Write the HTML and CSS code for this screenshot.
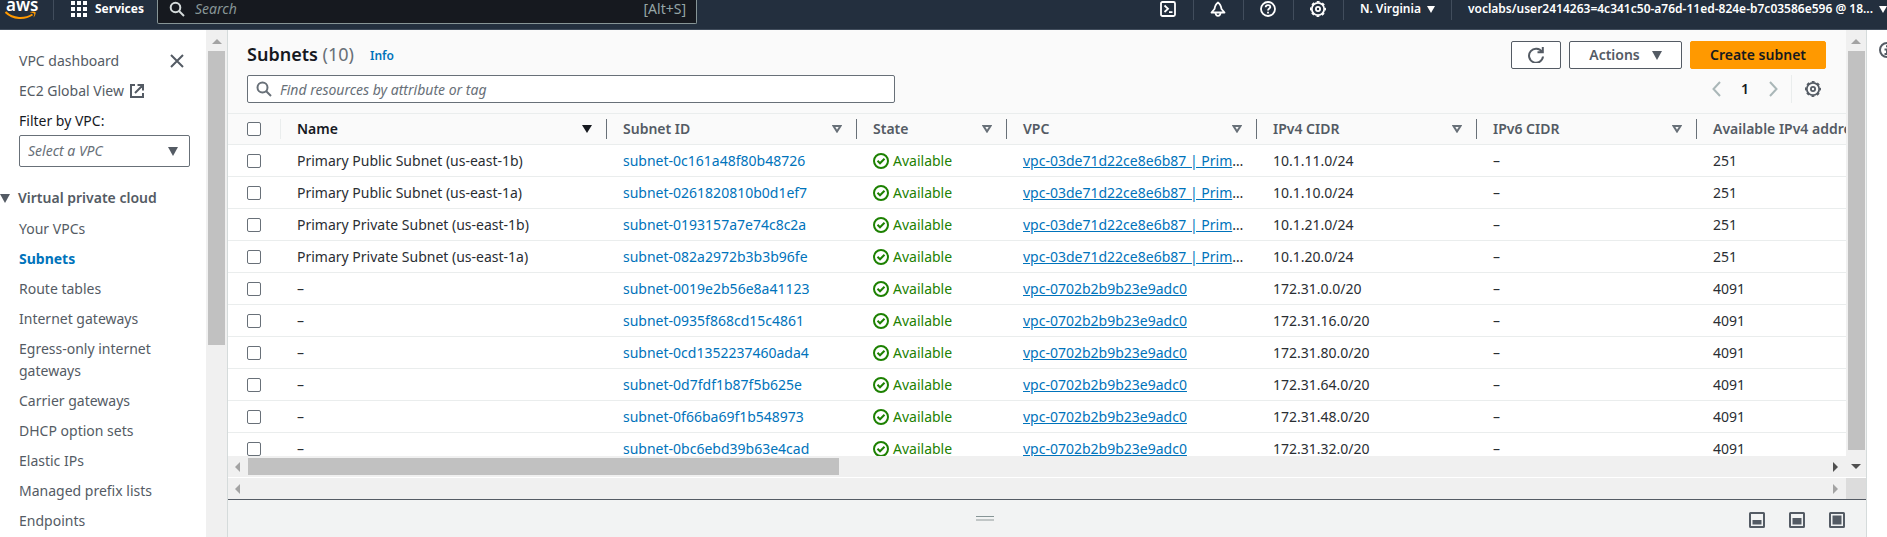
FILE: index.html
```html
<!DOCTYPE html>
<html lang="en">
<head>
<meta charset="utf-8">
<title>Subnets | VPC Console</title>
<link rel="stylesheet" href="styles.css">
</head>
<body>
<header class="topbar">
  <a class="logo" href="#" aria-label="aws"><span class="logo-word">aws</span>
    <svg class="logo-smile" width="32" height="9" viewBox="0 0 32 9"><path d="M.5 1C8 8.500 20 8.500 27.500 3.500" fill="none" stroke="#f90" stroke-width="2"/><path d="M24.500 1.200C27 .3 29.500 .2 30.500 1c.5 1.500-.5 4-2 5.500.5-1.600 1-3.200.6-4-.8-.6-2.800-.9-4.600-1.300z" fill="#f90"/></svg>
  </a>
  <button class="services" type="button">
    <svg width="16" height="16" viewBox="0 0 16 16" fill="#fff"><path d="M0 0h4v4H0zM6 0h4v4H6zM12 0h4v4h-4zM0 6h4v4H0zM6 6h4v4H6zM12 6h4v4h-4zM0 12h4v4H0zM6 12h4v4H6zM12 12h4v4h-4z"/></svg>
    <span>Services</span>
  </button>
  <div class="global-search">
    <svg width="16" height="16" viewBox="0 0 16 16" fill="none" stroke="#d5dbdb" stroke-width="2"><circle cx="6.500" cy="6.500" r="4.800"/><path d="M10 10l5 5"/></svg>
    <input type="search" placeholder="Search" aria-label="Search">
    <span>[Alt+S]</span>
  </div>
  <nav class="tools" aria-label="Account tools">
    <button type="button" aria-label="CloudShell"><svg width="16" height="16" viewBox="0 0 16 16" fill="none" stroke="#fff" stroke-width="1.800"><rect x="1" y="1" width="14" height="14" rx="1.500"/><path d="M4.500 4.500L8 7.800 4.500 11M9 11.200h3.500"/></svg></button>
    <button type="button" aria-label="Notifications"><svg width="16" height="16" viewBox="0 0 16 16" fill="none" stroke="#fff" stroke-width="1.800" stroke-linejoin="round"><path d="M8 1.500C5.500 3 5 5 4.500 8L1.500 11.500h13L11.500 8C11 5 10.500 3 8 1.500z"/><path d="M5.500 12c.2 1.900 1 2.900 2.500 2.900s2.300-1 2.500-2.900"/></svg></button>
    <button type="button" aria-label="Help"><svg width="16" height="16" viewBox="0 0 16 16" fill="none" stroke="#fff" stroke-width="1.800"><circle cx="8" cy="8" r="7"/><path d="M5.700 6.300c0-3 4.700-2.900 4.600-.2C10.200 7.500 8 7.600 8 9.500"/><path d="M8 10.700v1.800"/></svg></button>
    <button type="button" aria-label="Settings"><svg width="16" height="16" viewBox="0 0 16 16" fill="none" stroke="#fff"><circle cx="8" cy="8" r="6.200" stroke-width="1.800"/><circle cx="8" cy="8" r="7.300" stroke-width="1.400" stroke-dasharray="2.900 2.830" stroke-dashoffset="1.450"/><circle cx="8" cy="8" r="2.100" stroke-width="1.800"/></svg></button>
    <button type="button" class="region">N. Virginia <i class="caret"></i></button>
    <button type="button" class="account"><span>voclabs/user2414263=4c341c50-a76d-11ed-824e-b7c03586e596 @ 18...</span> <i class="caret"></i></button>
  </nav>
</header>

<div class="shell">
  <nav class="sidebar" aria-label="VPC">
    <div class="side-content">
      <div class="side-head"><a href="#">VPC dashboard</a>
        <button type="button" class="close" aria-label="Close"><svg width="14" height="14" viewBox="0 0 14 14" fill="none" stroke="#545b64" stroke-width="2"><path d="M1 1l12 12M13 1L1 13"/></svg></button>
      </div>
      <a class="side-link" href="#">EC2 Global View
        <svg width="14" height="14" viewBox="0 0 14 14" fill="none" stroke="#545b64" stroke-width="2"><path d="M5 1H1v12h12V9M7.500 1H13v5.500M13 1L5 9"/></svg></a>
      <label class="filter-label" for="vpc-filter">Filter by VPC:</label>
      <div class="select">
        <select id="vpc-filter"><option>Select a VPC</option></select>
        <svg width="10" height="9" viewBox="0 0 10 9"><path d="M0 0h10L5 9z" fill="#545b64"/></svg>
      </div>
      <button type="button" class="section"><svg width="10" height="9" viewBox="0 0 10 9"><path d="M0 0h10L5 9z" fill="#545b64"/></svg>Virtual private cloud</button>
      <ul class="side-list">
        <li><a href="#">Your VPCs</a></li>
        <li><a href="#" class="current" aria-current="page">Subnets</a></li>
        <li><a href="#">Route tables</a></li>
        <li><a href="#">Internet gateways</a></li>
        <li><a href="#">Egress-only internet gateways</a></li>
        <li><a href="#">Carrier gateways</a></li>
        <li><a href="#">DHCP option sets</a></li>
        <li><a href="#">Elastic IPs</a></li>
        <li><a href="#">Managed prefix lists</a></li>
        <li><a href="#">Endpoints</a></li>
      </ul>
    </div>
    <div class="vbar side-bar"><i class="arrow up"></i><div class="thumb side-thumb"></div></div>
  </nav>

  <main class="main">
    <div class="upper">
      <div class="pane">
        <section class="panel-head">
          <div class="title-row">
            <h1>Subnets <span>(10)</span></h1>
            <a class="info" href="#">Info</a>
            <div class="actions">
              <button type="button" class="btn refresh" aria-label="Refresh"><svg width="16" height="16" viewBox="0 0 16 16" fill="none" stroke="#545b64" stroke-width="2"><path d="M14 5A7 7 0 1 0 15 9.500M9.500 5.200h5.300V0"/></svg></button>
              <button type="button" class="btn menu">Actions <svg width="10" height="9" viewBox="0 0 10 9"><path d="M0 0h10L5 9z" fill="#545b64"/></svg></button>
              <button type="button" class="btn primary">Create subnet</button>
            </div>
          </div>
          <div class="filter-row">
            <div class="find">
              <svg width="16" height="16" viewBox="0 0 16 16" fill="none" stroke="#687078" stroke-width="2"><circle cx="6.500" cy="6.500" r="5"/><path d="M10 10l5 5"/></svg>
              <input type="search" placeholder="Find resources by attribute or tag" aria-label="Find resources">
            </div>
            <div class="pager">
              <button type="button" aria-label="Previous page"><svg width="9" height="16" viewBox="0 0 9 16" fill="none" stroke="#aab7b8" stroke-width="2"><path d="M8 1L1.500 8 8 15"/></svg></button>
              <button type="button" class="page">1</button>
              <button type="button" aria-label="Next page"><svg width="9" height="16" viewBox="0 0 9 16" fill="none" stroke="#aab7b8" stroke-width="2"><path d="M1 1l6.500 7L1 15"/></svg></button>
              <button type="button" class="prefs" aria-label="Preferences"><svg width="16" height="16" viewBox="0 0 16 16" fill="none" stroke="#545b64"><circle cx="8" cy="8" r="6.200" stroke-width="1.800"/><circle cx="8" cy="8" r="7.300" stroke-width="1.400" stroke-dasharray="2.900 2.830" stroke-dashoffset="1.450"/><circle cx="8" cy="8" r="2.100" stroke-width="1.800"/></svg></button>
            </div>
          </div>
        </section>
        <div class="table-wrap">
          <table>
            <colgroup><col class="c-check"><col class="c-name"><col class="c-id"><col class="c-state"><col class="c-id"><col class="c-cidr"><col class="c-cidr"><col></colgroup>
            <thead><tr>
              <th><div class="th light"><input type="checkbox" aria-label="Select all"></div></th>
              <th class="sorted"><div class="th">Name <svg width="10" height="8" viewBox="0 0 10 8"><path d="M0 0h10L5 8z" fill="#16191f"/></svg></div></th>
              <th><div class="th">Subnet ID <svg width="10" height="8" viewBox="0 0 10 8"><path d="M1.500 1h7L5 6.500z" fill="none" stroke="#687078" stroke-width="2"/></svg></div></th>
              <th><div class="th">State <svg width="10" height="8" viewBox="0 0 10 8"><path d="M1.500 1h7L5 6.500z" fill="none" stroke="#687078" stroke-width="2"/></svg></div></th>
              <th><div class="th">VPC <svg width="10" height="8" viewBox="0 0 10 8"><path d="M1.500 1h7L5 6.500z" fill="none" stroke="#687078" stroke-width="2"/></svg></div></th>
              <th><div class="th">IPv4 CIDR <svg width="10" height="8" viewBox="0 0 10 8"><path d="M1.500 1h7L5 6.500z" fill="none" stroke="#687078" stroke-width="2"/></svg></div></th>
              <th><div class="th">IPv6 CIDR <svg width="10" height="8" viewBox="0 0 10 8"><path d="M1.500 1h7L5 6.500z" fill="none" stroke="#687078" stroke-width="2"/></svg></div></th>
              <th><div class="th">Available IPv4 addresses</div></th>
            </tr></thead>
            <tbody id="rows"></tbody>
          </table>
        </div>
        <div class="hbar"><i class="arrow left"></i><div class="thumb table-thumb"></div><i class="arrow right dark"></i></div>
      </div>
      <div class="vbar main-bar"><i class="arrow up"></i><div class="thumb main-thumb"></div><i class="arrow down dark"></i></div>
    </div>
    <div class="outer-bar"><div class="hbar"><i class="arrow left"></i><i class="arrow right"></i></div><div class="corner"></div></div>
    <div class="split">
      <div class="grip"></div>
      <div class="split-tools">
        <button type="button" aria-label="Small panel"><svg width="16" height="16" viewBox="0 0 16 16"><rect x="1" y="1" width="14" height="14" rx=".5" fill="none" stroke="#545b64" stroke-width="2"/><path d="M3.500 8h9v4.500h-9z" fill="#545b64"/></svg></button>
        <button type="button" aria-label="Medium panel"><svg width="16" height="16" viewBox="0 0 16 16"><rect x="1" y="1" width="14" height="14" rx=".5" fill="none" stroke="#545b64" stroke-width="2"/><path d="M3.500 6h9v6.500h-9z" fill="#545b64"/></svg></button>
        <button type="button" aria-label="Full panel"><svg width="16" height="16" viewBox="0 0 16 16"><rect x="1" y="1" width="14" height="14" rx=".5" fill="none" stroke="#545b64" stroke-width="2"/><path d="M3.500 3.500h9v9h-9z" fill="#545b64"/></svg></button>
      </div>
    </div>
  </main>

  <aside class="help">
    <button type="button" aria-label="Open help"><svg width="16" height="16" viewBox="0 0 16 16" fill="none" stroke="#545b64" stroke-width="2"><circle cx="8" cy="8" r="7"/><path d="M8 3.300v2M5.500 7.500H8V12M5.500 12h5"/></svg></button>
  </aside>
</div>
<script src="rows.js"></script>
</body>
</html>
```
FILE: styles.css
```css
* { box-sizing: border-box; }
body {
  margin: 0;
  height: 100vh;
  overflow: hidden;
  display: flex;
  flex-direction: column;
  background: #fff;
  color: #16191f;
  font: 14px/22px "Noto Sans", "Open Sans", sans-serif;
}
a { color: inherit; text-decoration: none; }
button { border: 0; padding: 0; background: none; color: inherit; font: inherit; display: flex; align-items: center; }
input { font: inherit; color: inherit; }
svg { flex: none; display: block; }
i { flex: none; }

/* top bar */
.topbar {
  flex: none;
  display: flex;
  align-items: flex-start;
  height: 30px;
  background: #232f3e;
  border-bottom: 1px solid #414d5c;
  color: #fff;
}
.logo { width: 54px; height: 20px; padding-left: 5px; border-right: 1px solid #414d5c; display: flex; flex-direction: column; justify-content: flex-end; }
.logo-word { font-size: 17px; line-height: 10px; font-weight: 600; padding-left: 1px; }
.logo-smile { flex: none; margin-top: 1px; }
.services { gap: 8px; height: 18px; width: 103px; padding-left: 17px; font-size: 12px; font-weight: 700; }
.global-search {
  flex: 0 1 540px;
  display: flex;
  align-items: center;
  gap: 10px;
  height: 24px;
  padding: 0 10px 6px 11px;
  background: #16191f;
  border: 1px solid #879596;
  border-top: 0;
  border-radius: 0 0 2px 2px;
  color: #95a5a6;
}
.global-search input { flex: 1; min-width: 0; height: 18px; padding: 0; border: 0; outline: 0; background: none; }
.global-search input::placeholder { color: #879596; font-style: italic; }
.tools { flex: none; display: flex; margin-left: auto; font-size: 12px; font-weight: 600; }
.tools button { height: 20px; padding: 0 16px 2px; border-right: 1px solid #414d5c; width: 50px; justify-content: center; }
.tools .region, .tools .account { width: auto; gap: 6px; }
.tools .account { border: 0; padding-right: 0; }
.caret { border: 4px solid transparent; border-top: 7px solid #fff; border-bottom: 0; }

.shell { flex: 1; min-height: 0; display: flex; }

/* sidebar */
.sidebar { flex: none; width: 228px; display: flex; border-right: 1px solid #d5dbdb; color: #545b64; overflow: hidden; }
.side-content { flex: 1; min-width: 0; padding: 20px 16px 0 0; }
.side-head, .side-link { display: flex; align-items: center; padding-left: 19px; margin-bottom: 8px; }
.side-head { justify-content: space-between; padding-right: 6px; }
.side-link { gap: 6px; }
.filter-label { display: block; padding-left: 19px; margin-bottom: 3px; color: #16191f; }
.select { margin-left: 19px; height: 32px; display: grid; align-items: center; }
.select select, .select svg { grid-area: 1 / 1; }
.select select { appearance: none; height: 32px; padding: 0 8px; border: 1px solid #687078; border-radius: 2px; background: #fff; color: #687078; font: inherit; font-style: italic; }
.select svg { justify-self: end; margin-right: 12px; pointer-events: none; }
.section { gap: 8px; margin: 20px 0 9px; font-weight: 600; white-space: nowrap; }
.side-list { list-style: none; margin: 0; padding: 0 0 0 19px; }
.side-list li { margin-bottom: 8px; }
.current { color: #0073bb; font-weight: 700; }

/* scrollbars */
.vbar { flex: none; width: 21px; display: flex; flex-direction: column; align-items: center; background: #f0f0f0; }
.main-bar { width: 20px; }
.hbar { flex: none; height: 21px; display: flex; align-items: center; background: #f0f0f0; }
.thumb { background: #c1c1c1; }
.arrow { border: 5px solid transparent; }
.arrow.up { border-top: 0; border-bottom-color: #a3a3a3; margin: 9px 0 7px; }
.arrow.down { border-bottom: 0; border-top-color: #a3a3a3; margin: 14px 0 8px; }
.arrow.left { border-left: 0; border-right-color: #a3a3a3; margin: 0 8px 0 7px; }
.arrow.right { border-right: 0; border-left-color: #a3a3a3; margin: 0 8px 0 auto; }
.arrow.down.dark { border-top-color: #505050; }
.arrow.right.dark { border-left-color: #505050; }
.side-thumb { width: 17px; height: 58%; }
.table-thumb { width: calc(37% - 8px); height: 17px; }
.main-thumb { width: 17px; flex: 1; }

/* main */
.main { flex: 1; min-width: 0; display: flex; flex-direction: column; }
.upper { flex: 1; min-height: 0; display: flex; border-bottom: 1px solid #fff; }
.pane { flex: 1; min-width: 0; display: flex; flex-direction: column; }
.panel-head { flex: none; padding: 11px 20px 10px 19px; background: #fafafa; border-bottom: 1px solid #eaeded; }
.title-row { display: flex; align-items: center; height: 28px; }
h1 { margin: 0 0 2px; font-size: 18px; line-height: 22px; font-weight: 600; }
h1 span { color: #687078; font-weight: 400; }
.info { margin: 2px 0 0 16px; color: #0073bb; font-size: 12px; font-weight: 600; }
.actions { display: flex; gap: 8px; margin-left: auto; }
.btn { height: 28px; justify-content: center; border: 1px solid #545b64; border-radius: 2px; background: #fff; color: #545b64; font-weight: 600; padding: 0 20px; white-space: nowrap; }
.refresh { width: 50px; padding: 0; }
.menu { gap: 12px; width: 113px; }
.primary { width: 136px; background: #f90; border-color: #f90; color: #16191f; }
.filter-row { display: flex; justify-content: space-between; margin-top: 6px; }
.find { flex: 0 1 648px; height: 28px; display: flex; align-items: center; gap: 8px; padding: 0 8px; border: 1px solid #687078; border-radius: 2px; background: #fff; }
.find input { flex: 1; min-width: 0; height: 24px; padding: 0; border: 0; outline: 0; background: none; }
.find input::placeholder { color: #687078; font-style: italic; }
.pager { display: flex; align-items: center; }
.page { padding: 0 20px; font-weight: 600; }
.prefs { height: 28px; margin-left: 13px; padding: 0 5px 0 13px; border-left: 1px solid #eaeded; }

.table-wrap { flex: 1; min-height: 0; overflow: hidden; }
table { table-layout: fixed; width: 2000px; border-collapse: separate; border-spacing: 0; }
.c-check { width: 53px; }
.c-name { width: 326px; }
.c-id { width: 250px; }
.c-state { width: 150px; }
.c-cidr { width: 220px; }
th { height: 31px; padding: 0; background: #fafafa; border-bottom: 1px solid #eaeded; color: #545b64; font-weight: 600; text-align: left; white-space: nowrap; }
.th { height: 20px; display: flex; align-items: center; justify-content: space-between; padding: 0 14px 0 16px; border-right: 1px solid #687078; }
.th.light { border-right-color: #eaeded; padding: 0 0 0 19px; }
.sorted { color: #16191f; }
td { height: 32px; padding: 0 10px 0 16px; border-bottom: 1px solid #eaeded; color: #2a2e33; overflow: hidden; text-overflow: ellipsis; white-space: nowrap; }
td:first-child { padding: 0 0 0 19px; }
td a { color: #0073bb; }
td a.vpc { text-decoration: underline; }
input[type="checkbox"] { appearance: none; display: block; width: 14px; height: 14px; margin: 0; border: 1px solid #687078; border-radius: 2px; background: #fff; }
.status { display: flex; align-items: center; gap: 4px; color: #1d8102; }

.outer-bar { flex: none; display: flex; }
.outer-bar .hbar { flex: 1; }
.corner { width: 20px; background: #dcdcdc; }

.split { flex: none; height: 38px; display: grid; grid-template-columns: 22fr auto 25fr; align-items: center; padding: 3px 21px 0 0; background: #f2f3f3; border-top: 1px solid #545b64; }
.grip { grid-column: 2; width: 18px; height: 5px; margin-bottom: 4px; border-top: 1px solid #879596; border-bottom: 2px solid #c1c6c6; }
.split-tools { display: flex; gap: 24px; justify-self: end; }

.help { flex: none; width: 21px; padding: 12px 0 0 12px; border-left: 1px solid #d5dbdb; overflow: hidden; }
```
FILE: rows.js
```js
const shared = "vpc-03de71d22ce8e6b87 | Primary";
const base = "vpc-0702b2b9b23e9adc0";
const data = [
  ["Primary Public Subnet (us-east-1b)", "subnet-0c161a48f80b48726", shared, "10.1.11.0/24", "251"],
  ["Primary Public Subnet (us-east-1a)", "subnet-0261820810b0d1ef7", shared, "10.1.10.0/24", "251"],
  ["Primary Private Subnet (us-east-1b)", "subnet-0193157a7e74c8c2a", shared, "10.1.21.0/24", "251"],
  ["Primary Private Subnet (us-east-1a)", "subnet-082a2972b3b3b96fe", shared, "10.1.20.0/24", "251"],
  ["–", "subnet-0019e2b56e8a41123", base, "172.31.0.0/20", "4091"],
  ["–", "subnet-0935f868cd15c4861", base, "172.31.16.0/20", "4091"],
  ["–", "subnet-0cd1352237460ada4", base, "172.31.80.0/20", "4091"],
  ["–", "subnet-0d7fdf1b87f5b625e", base, "172.31.64.0/20", "4091"],
  ["–", "subnet-0f66ba69f1b548973", base, "172.31.48.0/20", "4091"],
  ["–", "subnet-0bc6ebd39b63e4cad", base, "172.31.32.0/20", "4091"]
];
const check = '<svg width="16" height="16" viewBox="0 0 16 16" fill="none" stroke="#1d8102" stroke-width="2"><circle cx="8" cy="8" r="7"/><path d="M4.500 7.800l2.500 2.500 4.500-4.500"/></svg>';
document.getElementById("rows").innerHTML = data.map(([name, id, vpc, cidr, free]) => `<tr>
  <td><input type="checkbox" aria-label="Select ${id}"></td>
  <td>${name}</td>
  <td><a href="#">${id}</a></td>
  <td><span class="status">${check}Available</span></td>
  <td><a class="vpc" href="#">${vpc}</a></td>
  <td>${cidr}</td>
  <td>–</td>
  <td>${free}</td>
</tr>`).join("");
```
